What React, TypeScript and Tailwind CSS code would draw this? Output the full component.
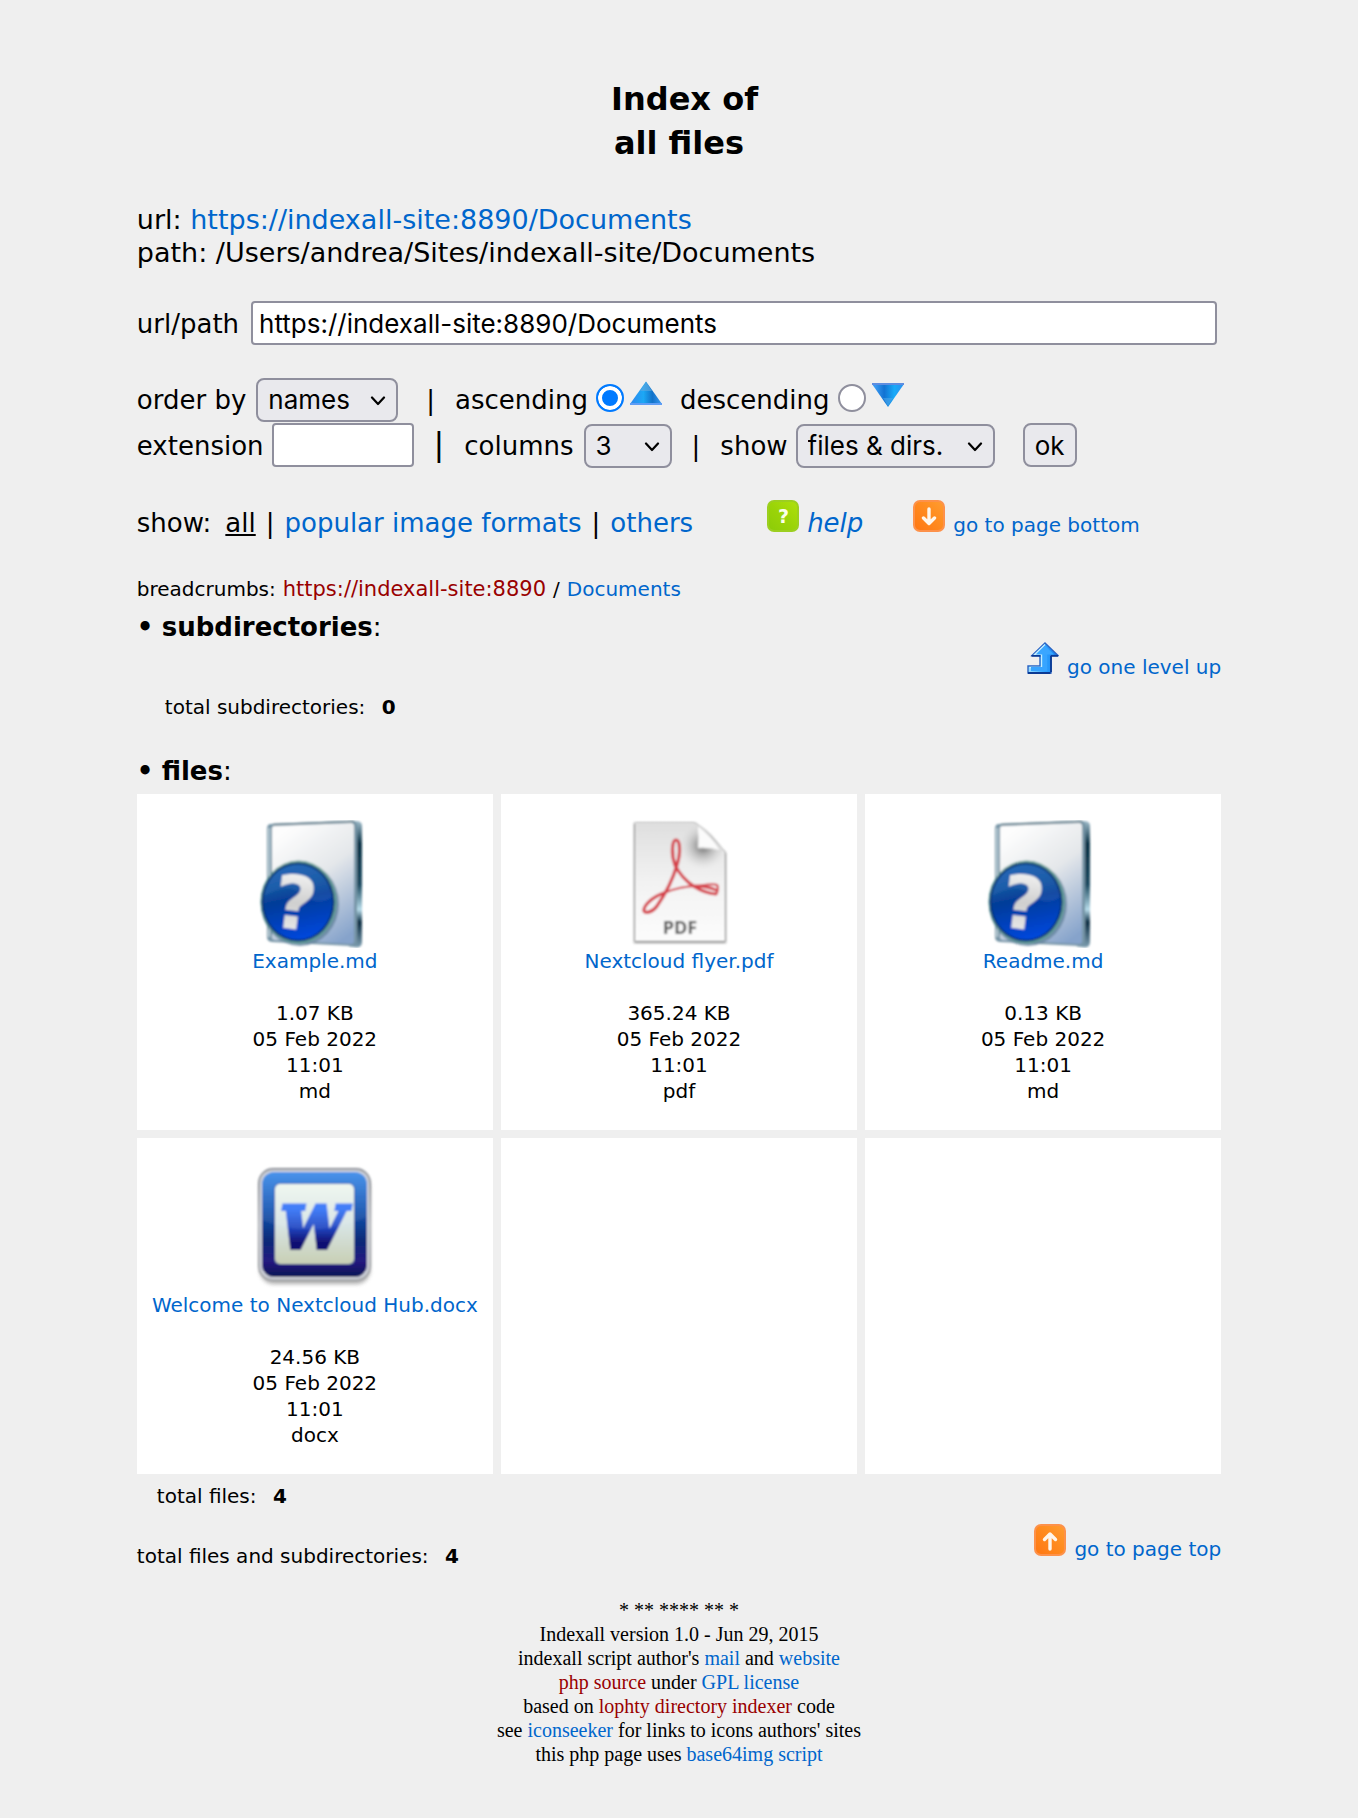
import React from "react";

const LINK = "text-[#0066cc] no-underline hover:underline";
const RED = "text-[#990000] no-underline hover:underline";

function A({ children, className = LINK }: { children: React.ReactNode; className?: string }) {
  return (
    <a href="#" className={className}>
      {children}
    </a>
  );
}

function Select({ id, options, className }: { id: string; options: string[]; className: string }) {
  return (
    <span className={`relative inline-block ${className}`}>
      <select
        id={id}
        className="h-11 w-full appearance-none rounded-lg border-2 border-[#8f8f9d] bg-[#e9e9ed] pl-[10px] font-[Inter,sans-serif] text-[26px] leading-8 text-black"
      >
        {options.map((o) => (
          <option key={o}>{o}</option>
        ))}
      </select>
      <svg
        className="pointer-events-none absolute top-[18px] right-3 h-[10px] w-4"
        viewBox="0 0 16 10"
        fill="none"
        stroke="#000"
        strokeWidth="2.2"
        strokeLinecap="round"
        strokeLinejoin="round"
      >
        <path d="M2 1.5 8 8l6-6.5" />
      </svg>
    </span>
  );
}

function Radio({ id, checked = false }: { id: string; checked?: boolean }) {
  return (
    <input
      id={id}
      type="radio"
      name="direction"
      defaultChecked={checked}
      className="mt-1.5 ml-2 size-7 shrink-0 appearance-none self-start rounded-full border-2 border-[#8f8f9d] bg-white checked:border-[#007aff] checked:bg-[#007aff] checked:shadow-[inset_0_0_0_4px_white]"
    />
  );
}

function UpTriangle() {
  return (
    <svg className="mt-[3px] ml-1.5 h-6 w-8 self-start" viewBox="0 0 32 24">
      <defs>
        <linearGradient id="tri-up" x1="0" x2="1">
          <stop offset="0.1" stopColor="#2b8ef0" />
          <stop offset="0.42" stopColor="#1ca8f5" />
          <stop offset="0.7" stopColor="#1272c9" />
          <stop offset="1" stopColor="#3a9af2" />
        </linearGradient>
      </defs>
      <path d="M16 .5 32 23v1H0v-1z" fill="url(#tri-up)" />
      <path d="M16 1 10 10h12z" fill="#63a9dd" opacity=".6" />
      <path d="M0 23h32" stroke="#5e9df5" strokeWidth="2" />
    </svg>
  );
}

function DownTriangle() {
  return (
    <svg className="mt-[5px] ml-1.5 h-6 w-8 self-start" viewBox="0 0 32 24">
      <defs>
        <linearGradient id="tri-down" x1="0" x2="1">
          <stop offset="0.1" stopColor="#3a9af2" />
          <stop offset="0.38" stopColor="#1272d2" />
          <stop offset="0.7" stopColor="#18aaf8" />
          <stop offset="1" stopColor="#2b8ef0" />
        </linearGradient>
      </defs>
      <path d="M0 0h32v1L16 24 0 1z" fill="url(#tri-down)" />
      <path d="m16 23 5-8H11z" fill="#4ba5ea" opacity=".6" />
      <path d="M0 1h32" stroke="#5e8de0" strokeWidth="2" />
    </svg>
  );
}

function HelpIcon() {
  return (
    <svg className="size-8 shrink-0" viewBox="0 0 32 32">
      <defs>
        <linearGradient id="help-g" x1="0" x2="1" y1="1" y2="0">
          <stop offset="0" stopColor="#8ccc08" />
          <stop offset="0.5" stopColor="#9bd408" />
          <stop offset="1" stopColor="#aee00c" />
        </linearGradient>
      </defs>
      <rect width="32" height="32" rx="7" fill="#9ccf20" />
      <rect x="2" y="2" width="28" height="28" rx="5" fill="url(#help-g)" />
      <text
        x="16.5"
        y="23"
        textAnchor="middle"
        fontFamily="DejaVu Sans"
        fontStyle="normal"
        fontWeight="700"
        fontSize="19"
        fill="#fbffe8"
      >
        ?
      </text>
    </svg>
  );
}

function OrangeArrow({ id, up = false }: { id: string; up?: boolean }) {
  return (
    <svg className="size-8 shrink-0" viewBox="0 0 32 32">
      <defs>
        <linearGradient id={id} x1="0" x2="1" y1="1" y2="0">
          <stop offset="0" stopColor="#ff7712" />
          <stop offset="0.6" stopColor="#ff8d20" />
          <stop offset="1" stopColor="#ff9c30" />
        </linearGradient>
      </defs>
      <rect width="32" height="32" rx="7" fill="#fd914a" />
      <rect x="2" y="2" width="28" height="28" rx="5" fill={`url(#${id})`} />
      <path
        d={up ? "M16 25V10M10.500 15.500l5.500-5.500 5.500 5.500" : "M16 9v14.500M10.500 18l5.500 5.500 5.500-5.500"}
        fill="none"
        stroke="#fff6ea"
        strokeWidth="3.4"
        strokeLinecap="round"
        strokeLinejoin="round"
      />
    </svg>
  );
}

function LevelUpIcon() {
  return (
    <svg className="size-8 shrink-0" viewBox="0 0 32 32">
      <defs>
        <linearGradient id="lvl" x1="0" x2="1">
          <stop offset="0" stopColor="#9be0ff" />
          <stop offset="0.55" stopColor="#2fa3ff" />
          <stop offset="1" stopColor="#1580ee" />
        </linearGradient>
      </defs>
      <path d="M18 1 31 13.5h-7V31H1v-7h12V13.5H5z" fill="url(#lvl)" stroke="#2a64c4" strokeWidth="1.4" />
      <path d="M18 2.5 7.500 12.500H14.500V25.500H2.500" fill="none" stroke="#c4edff" strokeWidth="1.3" />
      <path d="M18 8v19H4" fill="none" stroke="#37a4ff" strokeWidth="4" />
      <path d="M18 4 9 12.500h18z" fill="#3aa6ff" />
      <path d="M1 31h22.500M24 14v16M4.500 13.800h9M24 13.800h7" stroke="#0b3a94" strokeWidth="1.8" />
    </svg>
  );
}

function UnknownFileIcon({ id }: { id: string }) {
  return (
    <svg className="size-32" viewBox="1 0 128 128">
      <defs>
        <linearGradient id={`${id}-page`} x1="0.3" x2="0.8" y1="0" y2="1">
          <stop offset="0" stopColor="#fdfdfd" />
          <stop offset="0.45" stopColor="#e4e7ea" />
          <stop offset="1" stopColor="#86a3cb" />
        </linearGradient>
        <linearGradient id={`${id}-side`} x1="0" x2="0" y1="0" y2="1">
          <stop offset="0" stopColor="#9fbccb" />
          <stop offset="0.18" stopColor="#0c3447" />
          <stop offset="0.5" stopColor="#1d4a60" />
          <stop offset="0.7" stopColor="#b7dcea" />
          <stop offset="0.8" stopColor="#0d2f45" />
          <stop offset="1" stopColor="#7fa0b2" />
        </linearGradient>
        <linearGradient id={`${id}-ball`} x1="0.4" x2="0.6" y1="0" y2="1">
          <stop offset="0" stopColor="#1a62b4" />
          <stop offset="0.3" stopColor="#10519f" />
          <stop offset="0.45" stopColor="#043c98" />
          <stop offset="1" stopColor="#0347df" />
        </linearGradient>
        <linearGradient id={`${id}-mark`} x1="0" x2="0" y1="0" y2="1">
          <stop offset="0" stopColor="#fff" />
          <stop offset="0.5" stopColor="#cfcfcf" />
          <stop offset="1" stopColor="#f4f4f4" />
        </linearGradient>
        <filter id={`${id}-soft`} x="-5%" y="-5%" width="110%" height="110%">
          <feGaussianBlur stdDeviation="0.8" />
        </filter>
      </defs>
      <g filter={`url(#${id}-soft)`}>
        <path d="M106 1q6 0 6 5v116q0 5-5 5.500l-8-1V1z" fill={`url(#${id}-side)`} />
        <path d="M21 4 102 .8q5 0 5 5V121q0 5-5 5L22 122q-5-.5-5-5V9q0-5 4-5z" fill="#7694a6" />
        <path d="M24 6 101 3q3 0 3 3v115q0 3-3 3l-76-4q-3 0-3-3V9q0-3 2-3z" fill={`url(#${id}-page)`} />
        <path d="M19 8v109" stroke="#b9ccd5" strokeWidth="2" />
        <path d="M23 4.500 104 1.500" stroke="#5b7885" strokeWidth="1.500" />
        <ellipse cx="50" cy="84" rx="39" ry="42" fill="#64839d" opacity=".8" />
        <ellipse cx="48.500" cy="82" rx="38" ry="41.500" fill="#5f9c94" />
        <ellipse cx="48" cy="82" rx="36.500" ry="39.500" fill="#073475" />
        <ellipse cx="48" cy="82" rx="34.500" ry="37.500" fill={`url(#${id}-ball)`} />
        <path d="M14 76a34 36 0 0 1 64-12q3 7 4 13-14 10-30-3-15-12-38 2z" fill="#3f78c0" opacity=".28" />
        <text
          x="45"
          y="109"
          textAnchor="middle"
          fontFamily="DejaVu Sans"
          fontWeight="700"
          fontSize="74"
          fill={`url(#${id}-mark)`}
          transform="rotate(7 45 84)"
        >
          ?
        </text>
      </g>
    </svg>
  );
}

function PdfIcon() {
  return (
    <svg className="size-32" viewBox="0 0 128 128">
      <defs>
        <linearGradient id="pdf-page" x1="0" x2="0" y1="0" y2="1">
          <stop offset="0" stopColor="#dedede" />
          <stop offset="0.5" stopColor="#f2f2f2" />
          <stop offset="1" stopColor="#fcfcfc" />
        </linearGradient>
        <radialGradient id="pdf-shade" gradientUnits="userSpaceOnUse" cx="88" cy="26" r="24">
          <stop offset="0" stopColor="#666" />
          <stop offset="0.35" stopColor="#999" stopOpacity="0.7" />
          <stop offset="1" stopColor="#e2e2e2" stopOpacity="0" />
        </radialGradient>
        <filter id="pdf-blur" x="-10%" y="-10%" width="120%" height="120%">
          <feGaussianBlur stdDeviation="1.8" />
        </filter>
        <filter id="pdf-soft" x="-5%" y="-5%" width="110%" height="110%">
          <feGaussianBlur stdDeviation="0.8" />
        </filter>
      </defs>
      <path d="M19 3h61l31 30v90H19z" fill="#777" opacity=".8" filter="url(#pdf-blur)" />
      <g filter="url(#pdf-soft)">
        <path d="M20 2h58q15 5 32 30v89H20z" fill="url(#pdf-page)" />
        <path d="M56 2h22q15 5 32 30v20H56z" fill="url(#pdf-shade)" />
        <path d="M82 5q2 12 1 23 12-1 23 3Q96 15 82 5z" fill="#fbfbfb" stroke="#d5d5d5" strokeWidth="1" />
        <g fill="none" stroke="#d5404a" strokeLinecap="round">
          <path
            d="M60 45C56 34 57 20 61 20s5 12 1 25C57 62 49 76 42 86c-4 6-12 8-13 5-1-5 8-14 20-18"
            strokeWidth="3.200"
          />
          <path d="M49 73c12-5 22-7 33-7 8-1 16-3 20-1 2 2 0 9-1 9" strokeWidth="2.200" />
          <path d="M101 74C88 73 70 65 60 45M80 66q12 0 21 4" strokeWidth="3" />
        </g>
        <text x="65" y="114" textAnchor="middle" fontFamily="Open Sans, sans-serif" fontWeight="700" fontSize="18" fill="#555">
          PDF
        </text>
      </g>
    </svg>
  );
}

function WordIcon() {
  return (
    <svg className="size-32" viewBox="0 0 128 128">
      <defs>
        <linearGradient id="w-frame" x1="0" x2="0" y1="0" y2="1">
          <stop offset="0" stopColor="#3a8bea" />
          <stop offset="0.35" stopColor="#1656b4" />
          <stop offset="0.65" stopColor="#0b2a78" />
          <stop offset="0.85" stopColor="#241a80" />
          <stop offset="1" stopColor="#0a1454" />
        </linearGradient>
        <linearGradient id="w-rim" x1="0" x2="0" y1="0" y2="1">
          <stop offset="0" stopColor="#8b8f96" />
          <stop offset="0.5" stopColor="#b9bcc2" />
          <stop offset="1" stopColor="#a2a4a8" />
        </linearGradient>
        <linearGradient id="w-paper" x1="0" x2="0" y1="0" y2="1">
          <stop offset="0" stopColor="#eef6ee" />
          <stop offset="0.5" stopColor="#d8e5e6" />
          <stop offset="1" stopColor="#c8cfb4" />
        </linearGradient>
        <linearGradient id="w-ink" gradientUnits="userSpaceOnUse" x1="0" x2="0" y1="40" y2="88">
          <stop offset="0.1" stopColor="#3274f8" />
          <stop offset="0.5" stopColor="#2045c0" />
          <stop offset="0.8" stopColor="#110f72" />
        </linearGradient>
        <filter id="w-blur" x="-10%" y="-10%" width="120%" height="130%">
          <feGaussianBlur stdDeviation="2" />
        </filter>
        <filter id="w-soft" x="-5%" y="-5%" width="110%" height="110%">
          <feGaussianBlur stdDeviation="0.8" />
        </filter>
      </defs>
      <rect x="9" y="10" width="110" height="110" rx="14" fill="#777" opacity=".6" filter="url(#w-blur)" />
      <g filter="url(#w-soft)">
        <rect x="7" y="4" width="113" height="113" rx="15" fill="url(#w-rim)" />
        <rect x="9" y="6" width="109" height="109" rx="13" fill="#d4d7de" />
        <rect x="11" y="8" width="105" height="105" rx="12" fill="url(#w-frame)" />
        <rect x="23" y="19" width="81" height="82" rx="6" fill="#12459c" opacity=".6" />
        <rect x="24" y="20" width="79" height="80" rx="5" fill="url(#w-paper)" />
        <text
          x="62"
          y="84"
          textAnchor="middle"
          fontFamily="DejaVu Serif"
          fontWeight="700"
          fontStyle="italic"
          fontSize="58"
          fill="url(#w-ink)"
          stroke="url(#w-ink)"
          strokeWidth="4"
        >
          W
        </text>
        <path d="M11 56q50 20 105-3V20q0-12-12-12H23Q11 8 11 20z" fill="#fff" opacity=".08" />
      </g>
    </svg>
  );
}

const files = [
  { name: "Example.md", size: "1.07 KB", ext: "md", icon: <UnknownFileIcon id="q1" /> },
  { name: "Nextcloud flyer.pdf", size: "365.24 KB", ext: "pdf", icon: <PdfIcon /> },
  { name: "Readme.md", size: "0.13 KB", ext: "md", icon: <UnknownFileIcon id="q2" /> },
  { name: "Welcome to Nextcloud Hub.docx", size: "24.56 KB", ext: "docx", icon: <WordIcon /> },
  null,
  null,
];

const FIELD = "rounded border-2 border-[#8f8f9d] bg-white font-[Inter,sans-serif] text-[26px] text-black";

export default function App() {
  return (
    <div className="min-h-screen bg-[#efefef] font-['DejaVu_Sans',Verdana,sans-serif] text-[26px] leading-[33px] text-black">
      <main className="mx-auto w-4/5 px-px pt-[77px] pb-6">
        <h1 className="text-center text-[32px] leading-[44px] font-bold">
          &nbsp;Index of
          <br />
          all files
        </h1>

        <div className="mt-[38px] text-[27px]">
          url: <A>https://indexall-site:8890/Documents</A>
          <br />
          path: /Users/andrea/Sites/indexall-site/Documents
        </div>

        <form onSubmit={(e) => e.preventDefault()}>
          <div className="mt-8 flex items-baseline pr-1">
            <label htmlFor="url">url/path</label>
            <input
              id="url"
              type="text"
              defaultValue="https://indexall-site:8890/Documents"
              className={`${FIELD} ml-3 h-11 min-w-0 flex-1 px-1.5`}
            />
          </div>

          <div className="mt-[33px] flex items-baseline">
            <label htmlFor="order">order by</label>
            <Select id="order" options={["names", "dates", "sizes"]} className="ml-2.5 w-[142px]" />
            <span className="ml-7">|</span>
            <label htmlFor="asc" className="ml-5">ascending</label>
            <Radio id="asc" checked />
            <UpTriangle />
            <label htmlFor="desc" className="ml-[18px]">descending</label>
            <Radio id="desc" />
            <DownTriangle />
          </div>

          <div className="mt-px flex items-baseline">
            <label htmlFor="ext">extension</label>
            <input id="ext" type="text" className={`${FIELD} ml-2 h-11 w-[142px] px-1.5`} />
            <span className="ml-5 text-[32px]">|</span>
            <label htmlFor="cols" className="ml-5">columns</label>
            <Select id="cols" options={["3", "4", "5"]} className="ml-2.5 w-[88px]" />
            <span className="ml-5">|</span>
            <label htmlFor="show" className="ml-5">show</label>
            <Select id="show" options={["files & dirs.", "files", "dirs."]} className="ml-2 w-[199px]" />
            <button
              type="submit"
              className="ml-7 h-11 w-[54px] rounded-lg border-2 border-[#8f8f9d] bg-[#e9e9ed] font-[Inter,sans-serif] text-[26px]"
            >
              ok
            </button>
          </div>
        </form>

        <nav className="mt-8 flex items-baseline">
          <span className="flex items-baseline gap-2.5">
            <span className="mr-1">show:</span>
            <a href="#" className="underline">all</a>
            <span>|</span>
            <A>popular image formats</A>
            <span>|</span>
            <A>others</A>
          </span>
          <a href="#" className={`${LINK} ml-[74px] flex items-baseline gap-2 italic`}>
            <HelpIcon />
            help
          </a>
          <a href="#bottom" className={`${LINK} ml-[50px] flex items-baseline gap-2 text-[20px]`}>
            <OrangeArrow id="down" />
            go to page bottom
          </a>
        </nav>

        <div className="mt-[34px] flex items-baseline gap-[7px] text-[20px] leading-[26px]">
          <span>breadcrumbs:</span>
          <a href="#" className={`${RED} text-[21px]`}>https://indexall-site:8890</a>
          <span>/</span>
          <A>Documents</A>
        </div>

        <h2 className="mt-[9px]">
          <b>•</b> <b>subdirectories</b>:
        </h2>
        <div className="-mt-0.5 flex justify-end">
          <a href="#" className={`${LINK} flex items-baseline gap-2 text-[20px]`}>
            <LevelUpIcon />
            go one level up
          </a>
        </div>
        <div className="mt-2.5 ml-7 text-[20px] leading-[26px]">
          total subdirectories: <b className="ml-2.5">0</b>
        </div>

        <h2 className="mt-[35px]">
          <b>•</b> <b>files</b>:
        </h2>
        <ul className="mt-1.5 grid grid-cols-3 gap-2 text-center text-[20px] leading-[26px]">
          {files.map((f, i) => (
            <li key={i} className="min-h-[336px] bg-white px-2 pt-[26px] pb-[24px]">
              {f && (
                <>
                  <div className="flex justify-center">{f.icon}</div>
                  <A>{f.name}</A>
                  <p className="mt-[26px]">
                    {f.size}
                    <br />
                    05 Feb 2022
                    <br />
                    11:01
                    <br />
                    {f.ext}
                  </p>
                </>
              )}
            </li>
          ))}
        </ul>

        <div className="mt-[9px] ml-5 text-[20px] leading-[26px]">
          total files: <b className="ml-2.5">4</b>
        </div>
        <div className="mt-[15px] flex items-start justify-between text-[20px]">
          <span className="mt-4">
            total files and subdirectories: <b className="ml-2.5">4</b>
          </span>
          <a href="#top" className={`${LINK} flex items-baseline gap-2`}>
            <OrangeArrow id="up" up />
            go to page top
          </a>
        </div>

        <footer id="bottom" className="mt-[25px] text-center font-['Liberation_Serif',serif] text-[20px] leading-6">
          <p>* ** **** ** *</p>
          <p>Indexall version 1.0 - Jun 29, 2015</p>
          <p>indexall script author's <A>mail</A> and <A>website</A></p>
          <p><A className={RED}>php source</A> under <A>GPL license</A></p>
          <p>based on <A className={RED}>lophty directory indexer</A> code</p>
          <p>see <A>iconseeker</A> for links to icons authors' sites</p>
          <p>this php page uses <A>base64img script</A></p>
        </footer>
      </main>
    </div>
  );
}
